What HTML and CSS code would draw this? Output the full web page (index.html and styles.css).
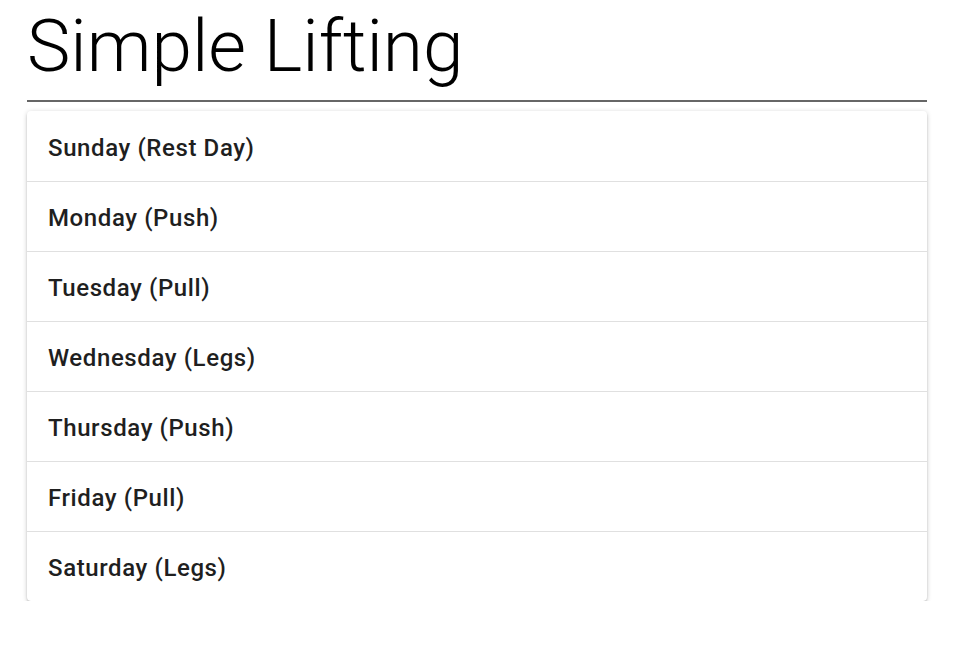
FILE: index.html
```html
<!DOCTYPE html>
<html>
<head>
<meta charset="utf-8">
<link rel="stylesheet" href="styles.css">
</head>
<body>
<div class="container">
  <h1 class="title">Simple Lifting</h1>
  <div class="days">
    <div class="day">Sunday (Rest Day)</div>
    <div class="day">Monday (Push)</div>
    <div class="day">Tuesday (Pull)</div>
    <div class="day">Wednesday (Legs)</div>
    <div class="day">Thursday (Push)</div>
    <div class="day">Friday (Pull)</div>
    <div class="day">Saturday (Legs)</div>
  </div>
</div>
</body>
</html>
```
FILE: styles.css
```css
html, body {
  margin: 0;
  background: #fff;
  font-family: Roboto, "Liberation Sans", sans-serif;
}
body {
  padding: 0 28px 0 27px;
}
.title {
  margin: 0;
  font-weight: 300;
  font-size: 73px;
  line-height: 92px;
  color: #000;
  border-bottom: 2px solid #666;
  padding-bottom: 8px;
}
.days {
  margin-top: 9px;
  background: #fff;
  border-radius: 4px;
  box-shadow: 0 2px 2px 0 rgba(0,0,0,0.14), 0 3px 1px -2px rgba(0,0,0,0.12), 0 1px 5px 0 rgba(0,0,0,0.2);
}
.day {
  height: 70px;
  display: flex;
  align-items: center;
  padding: 3px 20px 0 21px;
  font-size: 24px;
  letter-spacing: 0.6px;
  font-weight: 500;
  color: #1f1f1f;
  border-top: 1px solid #e0e0e0;
  box-sizing: border-box;
}
.day:first-child {
  border-top: none;
}
```
